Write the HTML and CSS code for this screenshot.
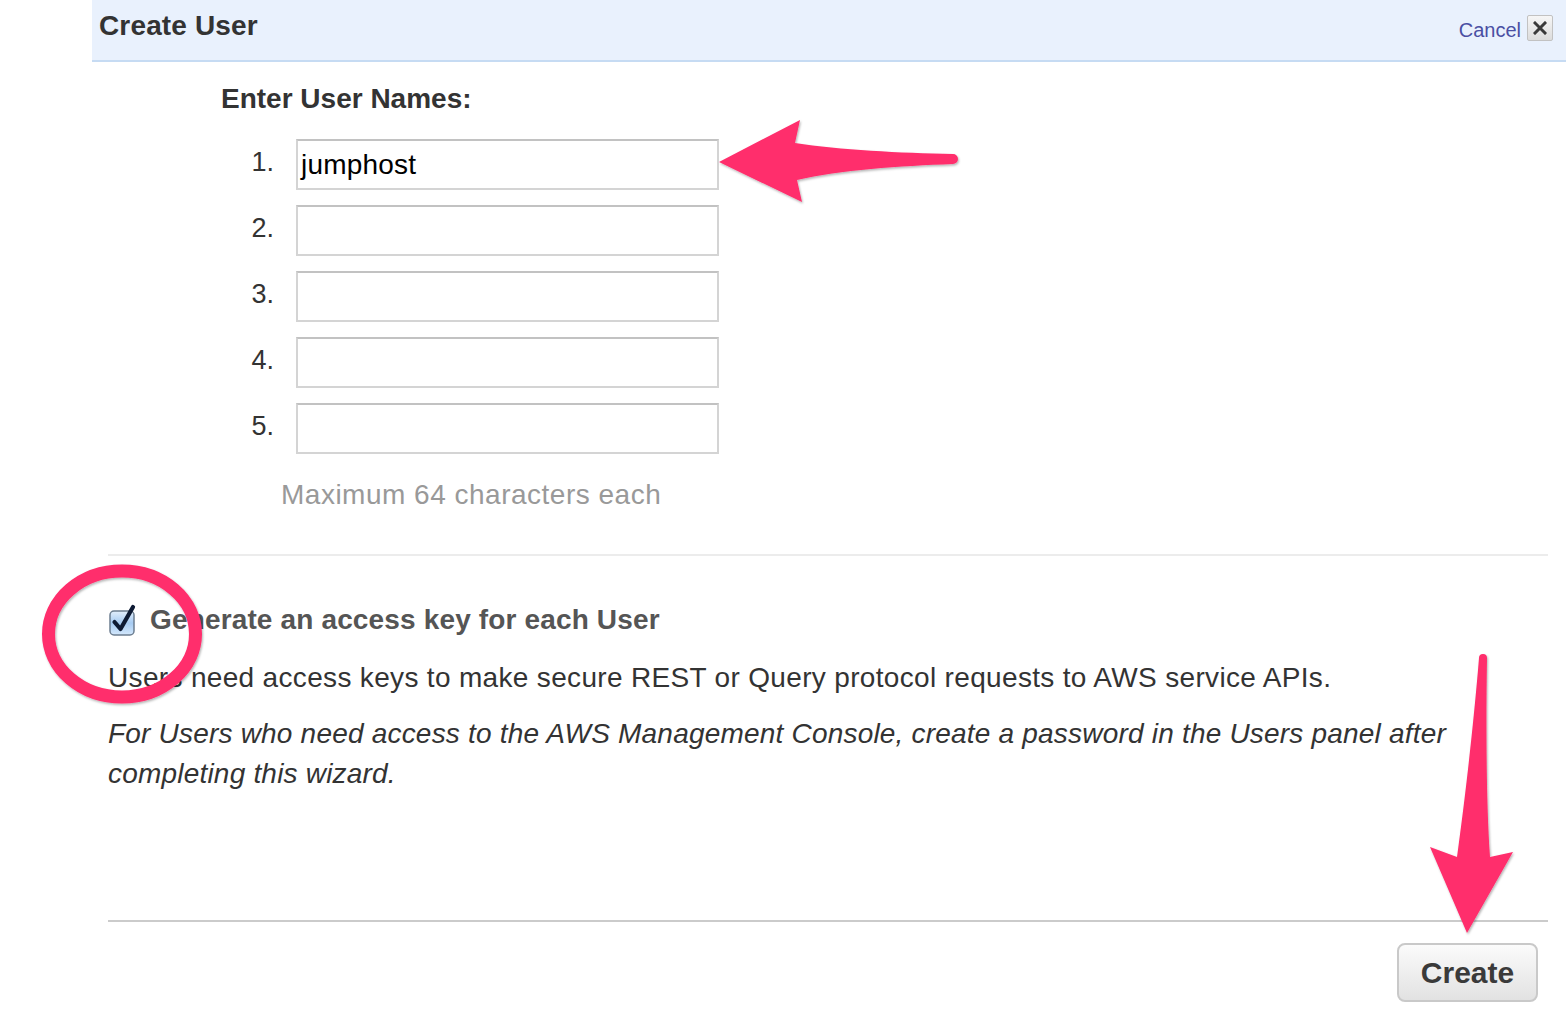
FILE: index.html
```html
<!DOCTYPE html>
<html>
<head>
<meta charset="utf-8">
<title>Create User</title>
<link rel="stylesheet" href="styles.css">
</head>
<body>
<div class="dialog">
  <div class="header">
    <h1 class="title">Create User</h1>
    <div class="header-actions">
      <a class="cancel">Cancel</a>
      <span class="close-box">
        <svg width="14" height="14" viewBox="0 0 14 14"><path d="M2 2 L12 12 M12 2 L2 12" stroke="#3a3a3a" stroke-width="3" stroke-linecap="square"/></svg>
      </span>
    </div>
  </div>

  <div class="content">
    <div class="names">
      <h2 class="names-title">Enter User Names:</h2>
      <div class="rows">
        <div class="row"><span class="num">1.</span><div class="field">jumphost</div></div>
        <div class="row"><span class="num">2.</span><div class="field"></div></div>
        <div class="row"><span class="num">3.</span><div class="field"></div></div>
        <div class="row"><span class="num">4.</span><div class="field"></div></div>
        <div class="row"><span class="num">5.</span><div class="field"></div></div>
      </div>
      <p class="hint">Maximum 64 characters each</p>
    </div>

    <div class="keys">
      <div class="check-row">
        <span class="checkbox">
          <svg width="30" height="34" viewBox="0 0 30 34">
            <defs>
              <linearGradient id="cbg" x1="0" y1="0" x2="0" y2="1">
                <stop offset="0" stop-color="#e3effc"/>
                <stop offset="0.5" stop-color="#a6cbf2"/>
                <stop offset="1" stop-color="#d4e8fc"/>
              </linearGradient>
            </defs>
            <rect x="1" y="9" width="24" height="24" rx="4" fill="url(#cbg)" stroke="#6c7d90" stroke-width="1.5"/>
            <path d="M5.5 20 L11.5 27 L24 5" fill="none" stroke="#0d1a33" stroke-width="4.2" stroke-linecap="round" stroke-linejoin="round"/>
          </svg>
        </span>
        <span class="check-label">Generate an access key for each User</span>
      </div>
      <p class="desc">Users need access keys to make secure REST or Query protocol requests to AWS service APIs.</p>
      <p class="note">For Users who need access to the AWS Management Console, create a password in the Users panel after completing this wizard.</p>
    </div>

    <div class="footer">
      <button class="create-btn">Create</button>
    </div>
  </div>
</div>

<svg class="annotations" width="1566" height="1016" viewBox="0 0 1566 1016">
  <defs>
    <filter id="sh" x="-10%" y="-10%" width="120%" height="120%">
      <feDropShadow dx="1" dy="1.5" stdDeviation="1" flood-color="#000" flood-opacity="0.3"/>
    </filter>
  </defs>
  <path filter="url(#sh)" fill="#ff2d6c" d="M719,162 L800,120 L795,143 C840,150 900,153 953,154 A5,5 0 0 1 953,164 C900,166 840,170 797,180 L802,202 Z"/>
  <path filter="url(#sh)" fill="#ff2d6c" d="M1479,658 A4,4 0 0 1 1487,658 C1486,720 1486,800 1490,857 L1513,852 L1467,933 L1430,847 L1457,857 C1465,800 1474,720 1479,658 Z"/>
  <ellipse cx="122" cy="634" rx="73.5" ry="63" fill="none" stroke="#ff2d6c" stroke-width="13" filter="url(#sh)"/>
</svg>
</body>
</html>
```

FILE: styles.css
```css
html, body {
  margin: 0;
  padding: 0;
  background: #fff;
}
body {
  font-family: "Liberation Sans", Arial, Helvetica, sans-serif;
  color: #333;
  width: 1566px;
  height: 1016px;
  overflow: hidden;
  position: relative;
}
.dialog {
  margin-left: 92px;
}
.header {
  height: 60px;
  background: #e9f1fd;
  border-bottom: 2px solid #c6dbf3;
  display: flex;
  align-items: center;
  justify-content: space-between;
  padding: 0 13px 0 7px;
  box-sizing: content-box;
}
.title {
  margin: 0 0 8px 0;
  font-size: 28px;
  font-weight: bold;
  color: #333;
  letter-spacing: 0.15px;
}
.header-actions {
  display: flex;
  align-items: center;
  gap: 6px;
  margin-bottom: 6px;
}
.cancel {
  font-size: 20px;
  color: #4a4fa3;
  margin-top: 6px;
}
.close-box {
  width: 24px;
  height: 24px;
  border: 1px solid #c2c2c2;
  border-radius: 2px;
  background: linear-gradient(#f6f6f6, #dcdcdc);
  display: flex;
  align-items: center;
  justify-content: center;
  margin-top: 2px;
}
.content {
  padding: 0 18px 0 16px;
}
.names {
  padding-left: 113px;
  padding-bottom: 42px;
  border-bottom: 2px solid #ececec;
}
.names-title {
  margin: 0;
  padding-top: 20px;
  font-size: 28px;
  font-weight: bold;
  line-height: 34px;
  color: #333;
}
.rows {
  margin-top: 23px;
  display: flex;
  flex-direction: column;
  gap: 15px;
}
.row {
  display: flex;
  align-items: center;
}
.num {
  width: 53px;
  text-align: right;
  font-size: 27px;
  margin-right: 22px;
  margin-top: -4px;
  color: #333;
}
.field {
  width: 416px;
  height: 47px;
  border: 2px solid #d4d4d4;
  border-top-color: #c2c2c2;
  box-sizing: content-box;
  font-size: 28px;
  color: #000;
  line-height: 47px;
  padding-left: 3px;
  letter-spacing: 0.2px;
}
.hint {
  margin: 24px 0 0 60px;
  font-size: 28px;
  line-height: 34px;
  color: #999;
  letter-spacing: 0.5px;
}
.keys {
  padding-top: 47px;
  height: 366px;
  box-sizing: border-box;
  border-bottom: 2px solid #cbcbcb;
}
.check-row {
  display: flex;
  align-items: center;
  height: 34px;
}
.checkbox {
  width: 30px;
  height: 34px;
  margin-left: 1px;
  margin-right: 11px;
  margin-top: -3px;
}
.check-label {
  font-size: 28px;
  font-weight: bold;
  color: #555;
  letter-spacing: 0.15px;
}
.desc {
  margin: 24px 0 0 0;
  font-size: 28px;
  line-height: 34px;
  color: #333;
  letter-spacing: 0.33px;
}
.note {
  margin: 19px 0 0 0;
  font-size: 28px;
  line-height: 40px;
  font-style: italic;
  color: #333;
  padding-right: 90px;
  letter-spacing: 0.2px;
}
.footer {
  display: flex;
  justify-content: flex-end;
  padding-top: 21px;
  padding-right: 10px;
}
.create-btn {
  width: 141px;
  height: 59px;
  border: 2px solid #c9c9c9;
  border-radius: 8px;
  background: linear-gradient(#fbfbfb, #e2e2e2);
  font-family: "Liberation Sans", Arial, sans-serif;
  font-size: 30px;
  font-weight: bold;
  color: #3a3a3a;
  padding: 0;
}
.annotations {
  position: absolute;
  top: 0;
  left: 0;
  pointer-events: none;
}
```
